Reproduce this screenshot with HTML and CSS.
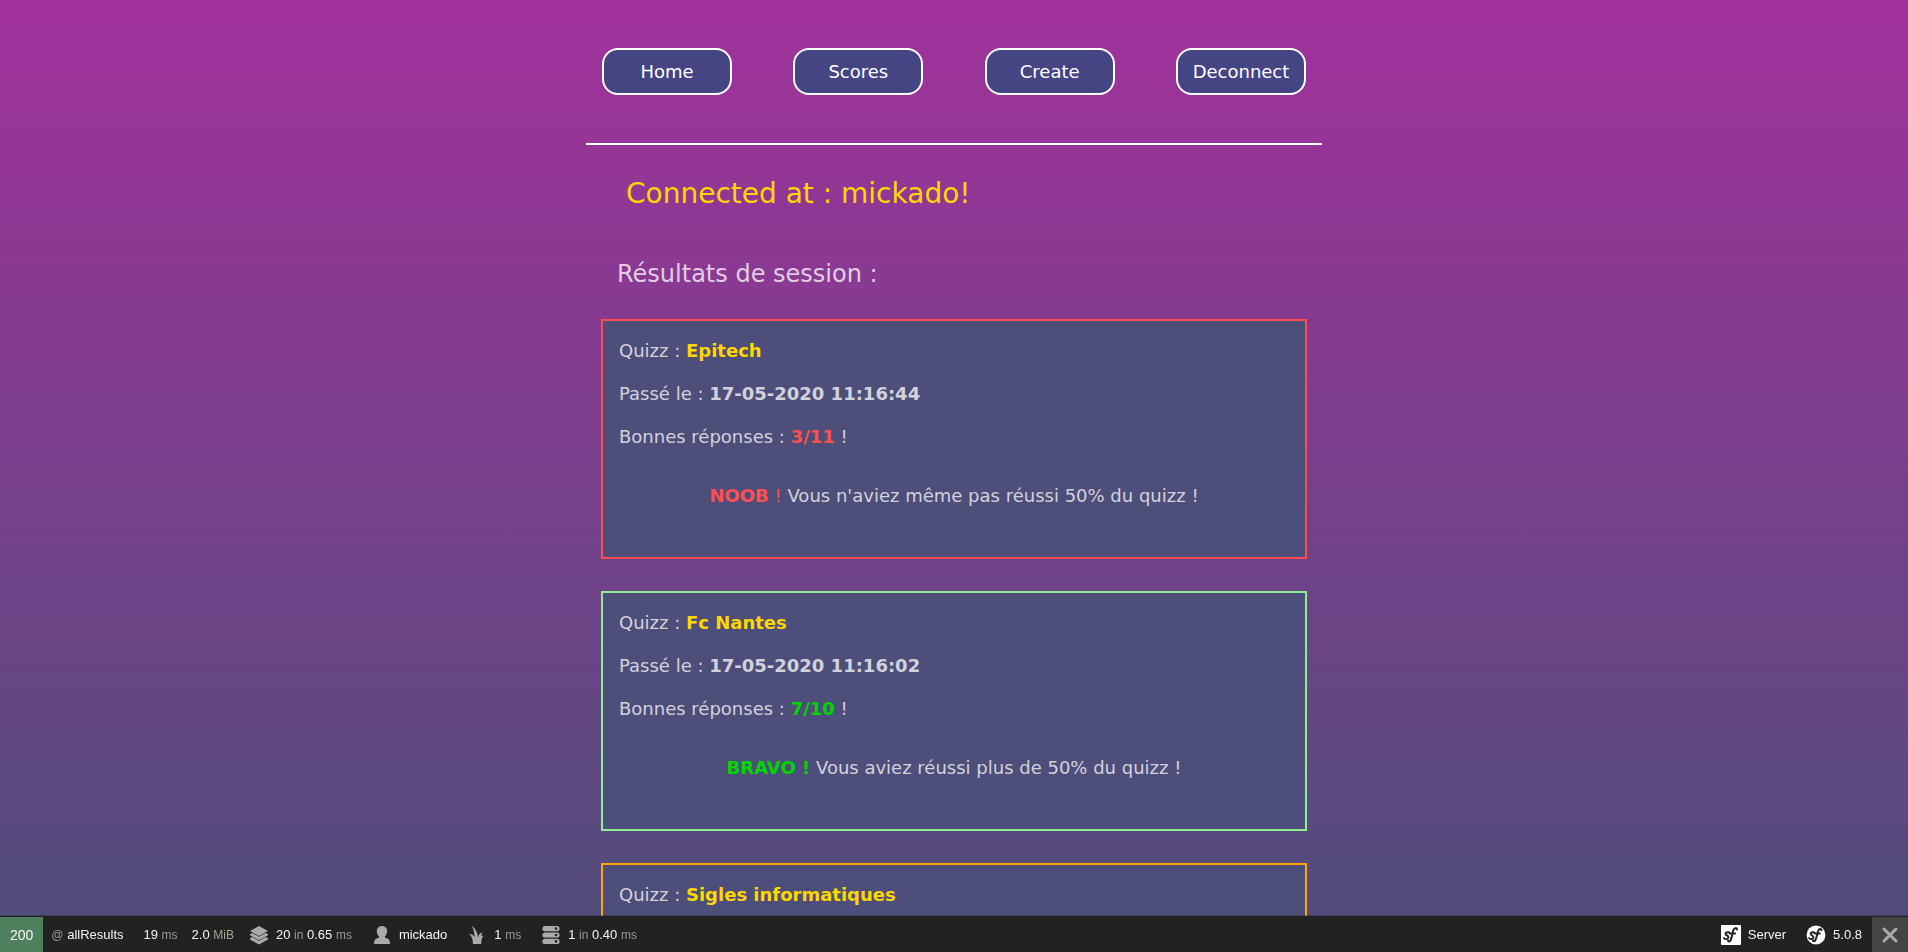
FILE: index.html
```
<!DOCTYPE html>
<html lang="fr">
<head>
<meta charset="utf-8">
<title>Quizz - Résultats</title>
<link rel="stylesheet" href="styles.css">
</head>
<body>
<div class="page">
  <header class="header">
    <nav class="nav">
      <a class="nav-link" href="#home">Home</a>
      <a class="nav-link" href="#scores">Scores</a>
      <a class="nav-link" href="#create">Create</a>
      <a class="nav-link" href="#deconnect">Deconnect</a>
    </nav>
  </header>
  <main class="main">
    <h1 class="welcome">Connected at : mickado!</h1>
    <h2 class="subtitle">Résultats de session :</h2>
    <div class="results">
      <article class="card card-fail">
        <p class="line">Quizz : <b class="quiz-name">Epitech</b></p>
        <p class="line">Passé le : <b>17-05-2020 11:16:44</b></p>
        <p class="line">Bonnes réponses : <b class="bad">3/11</b> !</p>
        <p class="line message"><span class="bad"><b>NOOB</b> !</span> Vous n'aviez même pas réussi 50% du quizz !</p>
      </article>
      <article class="card card-success">
        <p class="line">Quizz : <b class="quiz-name">Fc Nantes</b></p>
        <p class="line">Passé le : <b>17-05-2020 11:16:02</b></p>
        <p class="line">Bonnes réponses : <b class="good">7/10</b> !</p>
        <p class="line message"><b class="good">BRAVO !</b> Vous aviez réussi plus de 50% du quizz !</p>
      </article>
      <article class="card card-average">
        <p class="line">Quizz : <b class="quiz-name">Sigles informatiques</b></p>
      </article>
    </div>
  </main>
</div>
<footer class="toolbar">
  <div class="status">200</div>
  <div class="block block-route"><span><span class="dim">@</span> allResults</span></div>
  <div class="block block-time"><span>19 <span class="dim">ms</span></span></div>
  <div class="block block-memory"><span>2.0 <span class="dim memory-unit">MiB</span></span></div>
  <div class="block">
    <svg class="icon" viewBox="0 0 20 20" aria-hidden="true"><path d="M10 1 19 6.100 10 11 1 6.100zM1 9.200l2.300-1.300L10 11.800l6.700-3.900L19 9.200v1l-9 5.100-9-5.100zM1 13.200l2.300-1.300L10 15.900l6.700-4L19 13.200v1.200l-9 5-9-5z"/></svg>
    <span>20 <span class="dim">in</span> 0.65 <span class="dim">ms</span></span>
  </div>
  <div class="block">
    <svg class="icon" viewBox="0 0 20 20" aria-hidden="true"><path d="M10 1c3.200 0 5.300 2.300 5.200 5.300-.1 2.200-1 4-2.300 5.200v1l3.100 1.300c1.500.7 2 2.600 2 5.200H2.100c0-2.600.4-4.500 2-5.200l3.100-1.300v-1C5.800 10.300 4.900 8.500 4.800 6.300 4.700 3.300 6.800 1 10 1z"/></svg>
    <span>mickado</span>
  </div>
  <div class="block">
    <svg class="icon" viewBox="0 0 20 20" aria-hidden="true"><path d="M6 19c-.3-2-.2-3.700-.7-5.200C4.500 11.400 3.500 9.800 1.600 9c2.900-.3 4.700.9 6 3.200C7.700 8.500 6.300 3.200 4.600.800c3.500 2.300 6.200 6.700 6.400 12.200.600-2.900 1.600-5.200 4.700-5.500-1.100 1.100-1.400 2.100-1.500 3.600.700-.6 1.400-.7 2.300-.2-1.500.9-2.200 3.600-2.300 8.100z"/></svg>
    <span>1 <span class="dim">ms</span></span>
  </div>
  <div class="block">
    <svg class="icon" viewBox="0 0 20 20" aria-hidden="true"><path fill-rule="evenodd" d="M4 1h12a2.500 2.500 0 0 1 0 5.200H4A2.500 2.500 0 0 1 4 1zM15 2.300a1.300 1.300 0 1 0 0 2.600 1.300 1.300 0 0 0 0-2.600zM4 7.400h12a2.500 2.500 0 0 1 0 5.200H4a2.500 2.500 0 0 1 0-5.200zM15 8.700a1.300 1.300 0 1 0 0 2.600 1.300 1.300 0 0 0 0-2.600zM4 13.800h12a2.500 2.500 0 0 1 0 5.200H4a2.500 2.500 0 0 1 0-5.200zM15 15.100a1.300 1.300 0 1 0 0 2.600 1.300 1.300 0 0 0 0-2.600z"/></svg>
    <span>1 <span class="dim">in</span> 0.40 <span class="dim">ms</span></span>
  </div>
  <div class="block block-server">
    <svg class="icon icon-logo" viewBox="0 0 20 20" aria-hidden="true"><rect width="20" height="20" rx="1"/><g class="logo-mark"><path d="M8.600 8.400c.2-1.800-4-1.600-4.100.4-.1 1.800 3.100 1.600 2.900 3.700-.2 2.100-4.100 2-4.400.6"/><path d="M16 4.600c.1-2.400-3-1.700-3.700.7-.9 2.800-1.400 7.200-2.600 9.700-.9 1.900-2.700 1.900-2.700.5"/><path d="M9.900 8.400h4.200"/></g></svg>
    <span>Server</span>
  </div>
  <div class="block">
    <svg class="icon icon-logo" viewBox="0 0 20 20" aria-hidden="true"><circle cx="10" cy="10" r="9.400"/><g class="logo-mark"><path d="M8.600 8.400c.2-1.800-3.800-1.600-3.900.4-.1 1.800 2.900 1.600 2.700 3.700-.2 2.100-3.900 2-4.200.6"/><path d="M15.400 5.300c.1-2.200-2.500-1.700-3.200.5-.9 2.700-1.400 6.400-2.600 8.900-.9 1.900-2.600 1.900-2.600.5"/><path d="M9.900 8.400h4"/></g></svg>
    <span>5.0.8</span>
  </div>
  <button class="close" type="button" aria-label="Close toolbar">
    <svg class="icon icon-close" viewBox="0 0 20 20" aria-hidden="true"><path d="M4 4l12 12M16 4 4 16"/></svg>
  </button>
</footer>
</body>
</html>
```
FILE: styles.css
```
* {
  box-sizing: border-box;
}

body {
  margin: 0;
  min-height: 100vh;
  font: 18px/21px "DejaVu Sans", sans-serif;
  color: rgba(255, 255, 255, 0.75);
  background: linear-gradient(#a2319c, #4e4e7a) fixed;
}

h1, h2, p {
  margin: 0;
  font-weight: normal;
}

.page {
  max-width: 736px;
  margin: 0 auto;
  padding-bottom: 36px;
}

.header {
  padding: 48px 16px;
  border-bottom: 2px solid #fff;
}

.nav {
  display: flex;
  justify-content: space-between;
}

.nav-link {
  width: 130px;
  padding: 11px 0;
  border: 2px solid #fff;
  border-radius: 16px;
  background: #464584;
  color: #fff;
  text-align: center;
  text-decoration: none;
}

.main {
  padding: 32px 15px;
}

.welcome {
  padding: 0 25px;
  font-size: 28px;
  line-height: 33px;
  color: #ffd700;
}

.subtitle {
  padding: 50px 16px 31px;
  font-size: 24px;
  line-height: 28px;
}

.results {
  display: flex;
  flex-direction: column;
  gap: 32px;
}

.card {
  display: flex;
  flex-direction: column;
  gap: 22px;
  min-height: 240px;
  padding: 19px 16px 51px;
  border: 2px solid;
  background: #4e4e7a;
}

.card-fail {
  border-color: #ff4c4c;
}

.card-success {
  border-color: #90ee90;
}

.card-average {
  border-color: #ffa500;
}

.line {
  color: rgba(255, 255, 255, 0.75);
}

.message {
  margin-top: 16px;
  text-align: center;
}

.quiz-name {
  color: #ffd700;
}

.bad {
  color: #ff5050;
}

.good {
  color: #00d500;
}

.toolbar {
  position: fixed;
  right: 0;
  bottom: 0;
  left: 0;
  display: flex;
  height: 36px;
  border-top: 1px solid #222;
  box-shadow: 0 -1px 0 rgba(0, 0, 0, 0.2);
  background: #222;
  color: #f5f5f5;
  font: 13px/36px "Liberation Sans", Arial, sans-serif;
  white-space: nowrap;
}

.status {
  padding: 0 10px;
  background: #4f805d;
  font-size: 14px;
}

.block {
  display: flex;
  align-items: center;
  gap: 7px;
  padding: 0 10px;
}

.block-route {
  padding-left: 8px;
}

.block-time {
  padding-right: 9px;
}

.block-memory {
  padding: 0 5px;
}

.block-server {
  margin-left: auto;
}

.dim {
  color: #999;
  font-size: 12px;
}

.memory-unit {
  color: #a9a38f;
}

.icon {
  width: 20px;
  height: 20px;
  fill: #aaa;
}

.icon-logo {
  fill: #fff;
}

.logo-mark {
  fill: none;
  stroke: #222;
  stroke-width: 2;
  stroke-linecap: round;
}

.close {
  display: flex;
  align-items: center;
  justify-content: center;
  width: 36px;
  padding: 0;
  border: 0;
  background: #444;
}

.icon-close {
  fill: none;
  stroke: #aaa;
  stroke-width: 3;
  stroke-linecap: round;
}
```
